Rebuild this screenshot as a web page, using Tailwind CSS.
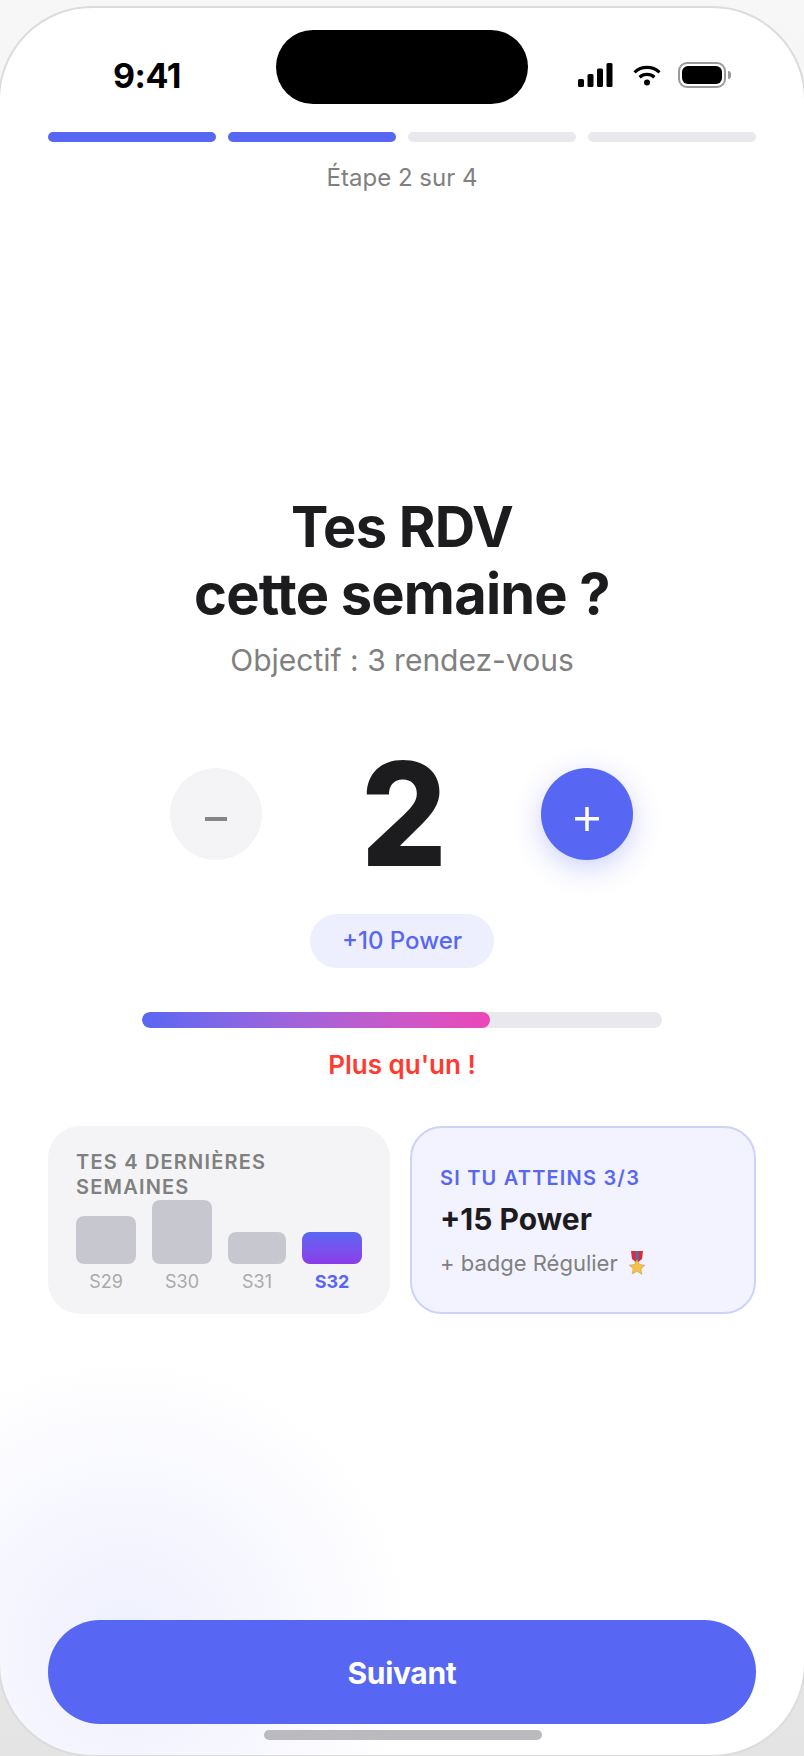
<!doctype html>
<html lang="fr"><head><meta charset="utf-8"><script src="https://cdn.jsdelivr.net/npm/@tailwindcss/browser@4"></script></head>
<body class="m-0 w-[804px] h-[1756px] overflow-hidden bg-gradient-to-b from-[#f7f7f7] to-[#e4e4e4] font-['Inter','Liberation_Sans',sans-serif]">
<div class="relative w-[808px] -ml-[2px] h-[1751px] mt-[6px] rounded-[94px] border-2 border-[#dcdcdc] bg-white overflow-hidden flex flex-col bg-[radial-gradient(circle_at_125px_1640px,#eef0fe_0,#f3f4fe_90px,#ffffff00_290px)]">
  <div class="flex items-start justify-between h-[114px] shrink-0 pl-[113px] pr-[73px]">
    <span class="mt-[44px] text-[34px] leading-[48px] font-bold text-black tracking-[-0.5px]">9:41</span>
    <div class="flex items-center mt-[54px]">
      <svg width="35" height="24" viewBox="0 0 35 24" fill="#000"><rect x="0" y="16" width="6" height="8" rx="1.5"/><rect x="9.5" y="11" width="6" height="13" rx="1.5"/><rect x="19" y="5.5" width="6" height="18.5" rx="1.5"/><rect x="28.5" y="0" width="6" height="24" rx="1.5"/></svg>
      <svg class="ml-[20px]" width="28" height="22" viewBox="0 0 28 22" fill="none" stroke="#000" stroke-width="3.2"><path d="M1.5 8.3C8.5 1.8 19.500 1.800 26.500 8.300"/><path d="M6.600 13.200C10.800 9.500 17.200 9.500 21.400 13.200"/><circle cx="14" cy="18.500" r="3" fill="#000" stroke="none"/></svg>
      <div class="ml-[17px] w-[48px] h-[26px] rounded-[9px] border-2 border-[#9a9a9a] p-[2px]"><div class="w-full h-full rounded-[6px] bg-black"></div></div>
      <div class="ml-[2px] w-[3px] h-[8px] rounded-r-[3px] bg-[#9a9a9a]"></div>
    </div>
  </div>
  <div class="absolute left-[276px] top-[22px] w-[252px] h-[74px] rounded-[37px] bg-black"></div>

  <div class="shrink-0 mt-[10px] px-[48px] flex gap-[12px]">
    <div class="flex-1 h-[10px] rounded-[5px] bg-[#5867f3]"></div>
    <div class="flex-1 h-[10px] rounded-[5px] bg-[#5867f3]"></div>
    <div class="flex-1 h-[10px] rounded-[5px] bg-[#e8e8ed]"></div>
    <div class="flex-1 h-[10px] rounded-[5px] bg-[#e8e8ed]"></div>
  </div>
  <p class="mt-[18px] text-center text-[24px] leading-[36px] text-[#808080]">Étape 2 sur 4</p>

  <h1 class="mt-[298px] text-center text-[56px] leading-[67px] font-bold tracking-[-0.8px] text-[#1c1c1e]">Tes RDV<br>cette semaine ?</h1>
  <p class="mt-[10px] text-center text-[30px] leading-[44px] text-[#808080] [font-feature-settings:'calt'_0]">Objectif : 3 rendez-vous</p>

  <div class="mt-[72px] pr-[1px] flex items-center justify-center">
    <div class="w-[92px] h-[92px] rounded-full bg-[#f4f4f6] flex items-center justify-center"><div class="w-[22px] h-[4px] mt-[9px] bg-[#858585]"></div></div>
    <div class="w-[279px] pl-[5px] text-center text-[144px] leading-[120px] font-extrabold text-[#1c1c1e]"><span class="inline-block scale-x-[0.94]">2</span></div>
    <div class="w-[92px] h-[92px] rounded-full bg-[#5867f3] shadow-[0_8px_28px_rgba(88,103,243,0.3)] flex items-center justify-center">
      <svg class="mt-[9px]" width="24" height="24" viewBox="0 0 24 24" fill="#fff"><rect x="0" y="10" width="24" height="3.500"/><rect x="10.250" y="0" width="3.500" height="24"/></svg>
    </div>
  </div>

  <div class="mt-[40px] flex justify-center"><div class="h-[54px] px-[32px] rounded-[27px] bg-[#eeeffe] text-[24px] leading-[54px] font-[550] text-[#5867f3]">+10 Power</div></div>

  <div class="mt-[44px] mx-[142px] h-[16px] rounded-[8px] bg-[#e8e8ed] overflow-hidden"><div class="w-[67%] h-full rounded-[8px] bg-gradient-to-r from-[#5867f3] to-[#ec46b8]"></div></div>
  <p class="mt-[19px] text-center text-[26px] leading-[36px] font-semibold text-[#ff3b30]">Plus qu'un !</p>

  <div class="mt-[43px] px-[48px] flex gap-[20px] h-[188px] shrink-0">
    <div class="w-[342px] rounded-[32px] bg-[#f4f4f6] pl-[28px] pt-[24px]">
      <p class="text-[20px] leading-[25px] w-[286px] font-semibold tracking-[1.2px] text-[#808080]">TES 4 DERNIÈRES SEMAINES</p>
      <div class="flex gap-[16px] items-end h-[64px]">
        <div class="w-[60px] h-[48px] rounded-[8px] bg-[#c7c7cf]"></div>
        <div class="w-[60px] h-[64px] rounded-[8px] bg-[#c7c7cf]"></div>
        <div class="w-[58px] h-[32px] rounded-[8px] bg-[#c7c7cf]"></div>
        <div class="w-[60px] h-[32px] rounded-[8px] bg-gradient-to-b from-[#5867f3] to-[#8b3be8]"></div>
      </div>
      <div class="flex gap-[16px] mt-[6px] text-center text-[18px] leading-[24px] text-[#aaaaaa]">
        <span class="w-[60px]">S29</span><span class="w-[60px]">S30</span><span class="w-[58px]">S31</span><span class="w-[60px] font-bold text-[#5867f3]">S32</span>
      </div>
    </div>
    <div class="w-[346px] rounded-[32px] border-2 border-[#cdd2fb] bg-[#f2f3fe] pl-[28px] pt-[2px] flex flex-col justify-center">
      <p class="text-[20px] leading-[28px] font-semibold tracking-[1.2px] text-[#5867f3]">SI TU ATTEINS 3/3</p>
      <p class="mt-[6px] text-[30px] leading-[42px] font-bold text-[#1c1c1e]">+15 Power</p>
      <p class="mt-[7px] flex items-center text-[22px] leading-[32px] text-[#808080]">+ badge Régulier
        <svg class="ml-[11px]" width="16" height="24" viewBox="0 0 16 24"><path d="M2 0h12l-1 8-5 4-5-4z" fill="#e02b36"/><rect x="6.500" y="0" width="3" height="9" fill="#4b6fb5"/><path d="M8 8.500l2.400 4.900 5.400.8-3.900 3.800.9 5.400L8 20.300l-4.800 2.600.9-5.400L.2 14.200l5.400-.8z" fill="#f2c14b" stroke="#c99528" stroke-width=".5"/></svg>
      </p>
    </div>
  </div>

  <div class="flex-1"></div>
  <div class="mx-[48px] h-[104px] rounded-[52px] bg-[#5867f3] text-center text-[30px] leading-[106px] font-bold tracking-[-0.3px] text-white">Suivant</div>
  <div class="mt-[6px] mb-[15px] ml-[264px] w-[278px] h-[10px] rounded-[5px] bg-[#bbbbbf]"></div>
</div>
</body></html>
